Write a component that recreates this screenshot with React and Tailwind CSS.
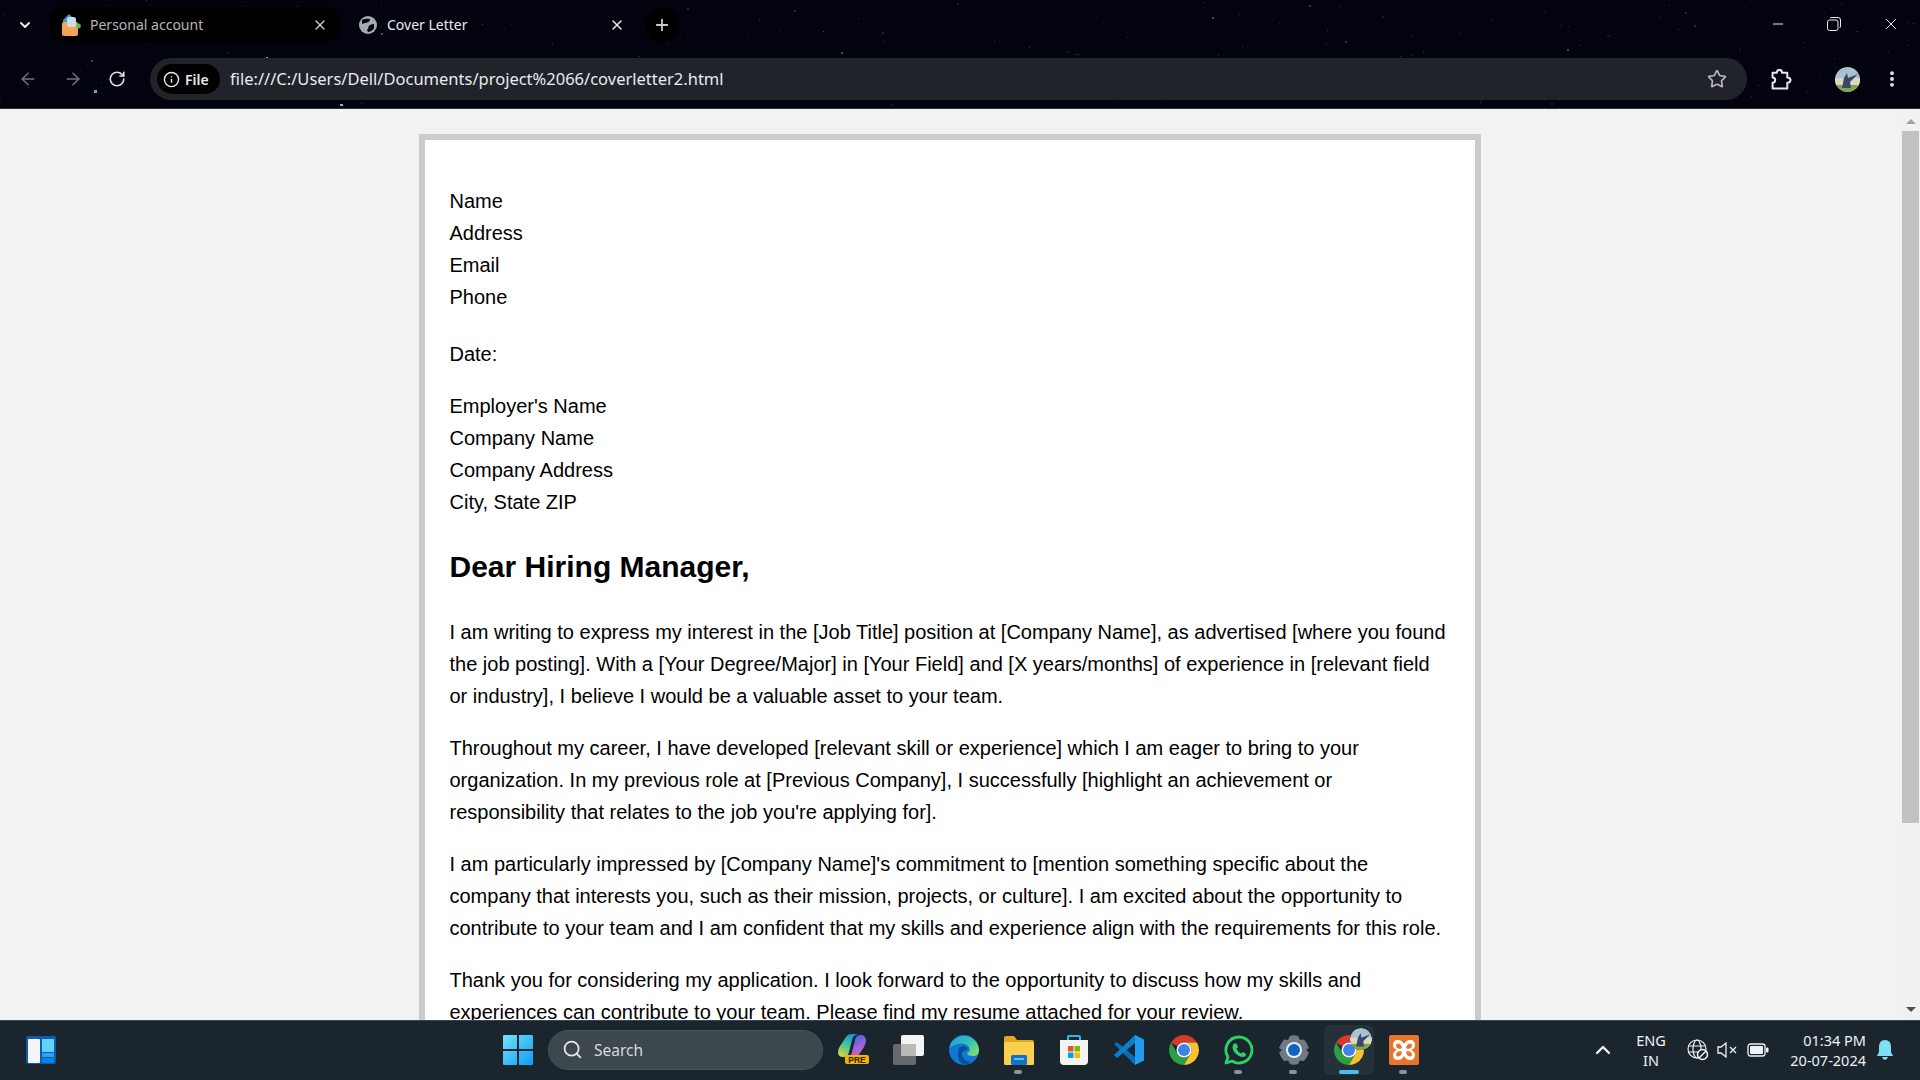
import React from "react";
import { ArrowLeft, ArrowRight, RotateCw, X, Plus, ChevronDown, ChevronUp, Star, Minus, EllipsisVertical, Search, Info } from "lucide-react";

const stars = [];
let seed = 7;
const rnd = () => { seed = (seed * 16807) % 2147483647; return seed / 2147483647; };
for (let i = 0; i < 170; i++) {
  stars.push({ x: Math.round(rnd() * 1920), y: Math.round(rnd() * 106), o: 0.12 + rnd() * 0.3, s: rnd() > 0.8 ? 2 : 1 });
}

function Stars() {
  return (
    <svg className="absolute inset-0 pointer-events-none" width="1920" height="108">
      {stars.map((s, i) => <rect key={i} x={s.x} y={s.y} width={s.s} height={s.s} fill="#9fb4c8" opacity={s.o} />)}
      <rect x="94" y="90" width="3" height="3" fill="#4fb3c0" />
      <rect x="266" y="57" width="2" height="2" fill="#4fb3c0" />
      <rect x="340" y="104" width="3" height="2" fill="#9aa" />
    </svg>
  );
}

function Avatar({ size = 25, id = "av" }) {
  return (
    <svg width={size} height={size} viewBox="0 0 25 25">
      <defs><clipPath id={id}><circle cx="12.5" cy="12.5" r="12.5" /></clipPath></defs>
      <g clipPath={`url(#${id})`}>
        <rect width="25" height="25" fill="#a9c2cf" />
        <rect y="11" width="25" height="8" fill="#ded6bd" />
        <rect y="18" width="25" height="7" fill="#7ea54a" />
        <path d="M7 21 L9 11 L12 6 L13 11 L23 7 L15 15 L16 21 Z" fill="#38476b" />
      </g>
    </svg>
  );
}

function ChromeIcon({ size = 30 }) {
  return (
    <svg width={size} height={size} viewBox="4 4 40 40">
      <path d="M6.68 14 A20 20 0 0 1 41.32 14 L24 14 A10 10 0 0 0 15.34 19 Z" fill="#d9392d" />
      <path d="M6.68 14 A20 20 0 0 0 24 44 L32.66 29 A10 10 0 0 1 15.34 29 Z" fill="#2c9f45" />
      <path d="M41.32 14 A20 20 0 0 1 24 44 L32.66 29 A10 10 0 0 0 24 14 Z" fill="#fbc02d" />
      <circle cx="24" cy="24" r="10" fill="#fff" />
      <circle cx="24" cy="24" r="8" fill="#3f83ea" />
    </svg>
  );
}

const Slot = ({ children, dot, active }) => (
  <div className="relative w-[55px] h-[60px] flex items-center justify-center">
    {active && <div className="absolute left-[3px] top-[5px] w-[50px] h-[50px] rounded-[6px] bg-[#25313a]" />}
    <div className="relative flex items-center justify-center">{children}</div>
    {dot && <div className="absolute bottom-[6px] left-[23px] w-[8px] h-[4px] rounded-full bg-[#8b949b]" />}
    {active && <div className="absolute bottom-[6px] left-[18px] w-[20px] h-[4px] rounded-full bg-[#47bdf5]" />}
  </div>
);

function Taskbar() {
  return (
    <div className="h-[60px] shrink-0 bg-[#1a252d] border-t border-[#3a444b] flex items-center pb-[2px] relative">
      <div className="w-[490px] pl-[26px] flex items-center shrink-0">
        <svg width="30" height="28" viewBox="0 0 30 28">
          <rect width="30" height="28" rx="2" fill="#0f5cab" />
          <rect x="2" y="3" width="12" height="24" rx="1" fill="#f3f5f7" />
          <rect x="16" y="3" width="12" height="13" fill="#62d2fb" />
          <rect x="16" y="17" width="12" height="4" fill="#2aa4ef" />
          <rect x="16" y="22" width="12" height="5" fill="#0a84e6" />
        </svg>
      </div>
      <div className="w-[55px] flex justify-center shrink-0">
        <svg width="30" height="30" viewBox="0 0 30 30">
          <defs><linearGradient id="wg" x1="0" y1="0" x2="1" y2="1"><stop offset="0" stopColor="#6fe4fb" /><stop offset="1" stopColor="#0f9bf5" /></linearGradient></defs>
          <path d="M0 1 Q0 0 1 0 H14 V14 H0 Z M16 0 H29 Q30 0 30 1 V14 H16 Z M0 16 H14 V30 H1 Q0 30 0 29 Z M16 16 H30 V29 Q30 30 29 30 H16 Z" fill="url(#wg)" />
        </svg>
      </div>
      <div className="w-[275px] h-[40px] ml-[3px] shrink-0 rounded-full bg-[#3c474e] border border-[#465158] flex items-center pl-[13px]">
        <Search size={21} strokeWidth={2} className="text-[#e4e7e9]" />
        <span className="ml-[11px] mt-[2px] text-[#d5d9dc] text-[15.5px] font-['Noto_Sans',sans-serif]">Search</span>
      </div>
      <div className="flex ml-[3px] shrink-0">
        <Slot>
          <svg width="31" height="31" viewBox="0 0 31 31">
            <defs>
              <linearGradient id="cpa" x1="0.7" y1="0" x2="0.2" y2="1"><stop offset="0" stopColor="#1c8fe8" /><stop offset=".45" stopColor="#3cc0a8" /><stop offset="1" stopColor="#d6d836" /></linearGradient>
              <linearGradient id="cpb" x1="0.3" y1="0" x2="0.8" y2="1"><stop offset="0" stopColor="#2a6fe0" /><stop offset=".5" stopColor="#9a62dc" /><stop offset="1" stopColor="#ef5fa8" /></linearGradient>
            </defs>
            <path d="M8 3 Q10 0 14 0 H20 Q15 1 14 6 L11 18 Q10 23 5 23 Q0 23 0 18 Q0 15 2 12 Z" fill="url(#cpa)" />
            <path d="M20 22 Q18 24 14 24 H9 Q13 23 14 18 L17 6 Q18 1 23 1 Q27 1 28 6 Q28 9 26 13 Z" fill="url(#cpb)" />
            <rect x="7" y="21" width="24" height="9" rx="2" fill="#f5b400" />
            <text x="19" y="28.6" textAnchor="middle" fontSize="8.5" fontWeight="700" fontFamily="Liberation Sans" fill="#2a2205">PRE</text>
          </svg>
        </Slot>
        <Slot>
          <svg width="31" height="30" viewBox="0 0 31 30">
            <rect x="0" y="9" width="23" height="21" rx="2" fill="#666a6d" />
            <rect x="8" y="0" width="23" height="21" rx="2" fill="#f4f4f4" />
            <rect x="8" y="9" width="15" height="12" fill="#b9b9b9" />
          </svg>
        </Slot>
        <Slot>
          <svg width="30" height="30" viewBox="0 0 30 30">
            <defs><linearGradient id="ed" x1="0" y1="0" x2="1" y2="0.7"><stop offset="0" stopColor="#1b9de2" /><stop offset=".6" stopColor="#35c1b8" /><stop offset="1" stopColor="#7fdc6e" /></linearGradient></defs>
            <circle cx="15" cy="15" r="15" fill="#0f78d0" />
            <path d="M0.3 13 A15 15 0 0 1 30 15 Q30 21 24 21 Q18 21 18 18 Q22 16 20 12 Q16 7 9 9 Q4 10 0.3 13 Z" fill="url(#ed)" />
            <path d="M9 17 Q9 11 15 11 Q20 12 18 15 Q12 15 13 21 Q15 26 22 27 Q18 30 14 29.5 Q8 26 9 17 Z" fill="#0b4f9c" />
          </svg>
        </Slot>
        <Slot dot>
          <svg width="30" height="30" viewBox="0 0 30 30">
            <path d="M0 3 Q0 1 2 1 H10 L13 5 H28 Q30 5 30 7 V10 H0 Z" fill="#e0a91d" />
            <rect x="0" y="7" width="30" height="23" rx="1.5" fill="#fcd04f" />
            <rect x="7" y="20" width="16" height="10" rx="1.5" fill="#0f74c9" />
            <rect x="10" y="23" width="10" height="2" fill="#66bdf2" />
          </svg>
        </Slot>
        <Slot>
          <svg width="28" height="30" viewBox="0 0 28 30">
            <path d="M8 6 V2 Q8 1 9 1 H19 Q20 1 20 2 V6" fill="none" stroke="#33b6ee" strokeWidth="2" />
            <path d="M0 5 H28 V26 Q28 30 24 30 H4 Q0 30 0 26 Z" fill="#f3f3f3" />
            <rect x="8" y="11" width="5.5" height="5.5" fill="#f25022" />
            <rect x="14.5" y="11" width="5.5" height="5.5" fill="#7fba00" />
            <rect x="8" y="17.5" width="5.5" height="5.5" fill="#00a4ef" />
            <rect x="14.5" y="17.5" width="5.5" height="5.5" fill="#ffb900" />
          </svg>
        </Slot>
        <Slot>
          <svg width="30" height="30" viewBox="0 0 30 30">
            <path d="M0 9 L3 7 L21 22 V30 Z" fill="#0a6cb5" />
            <path d="M21 0 L0 20 L3 23 L21 8 Z" fill="#0a7fd0" />
            <path d="M21 0 L30 4.5 V25.5 L21 30 Z" fill="#1f9cf0" />
          </svg>
        </Slot>
        <Slot><ChromeIcon /></Slot>
        <Slot dot>
          <svg width="30" height="30" viewBox="0 0 30 30">
            <path d="M15 2 A13 13 0 1 1 8 26 L2 28 L4 22 A13 13 0 0 1 15 2 Z" fill="none" stroke="#2bd366" strokeWidth="2.8" strokeLinejoin="round" />
            <path d="M10 8.5 L12.5 8.5 L14 12 L12.5 14 Q14 17 17 18.5 L19 17 L22 19 L21.5 21 Q19 23 15 21 Q9 18 8.5 12.5 Q8.5 10 10 8.5 Z" fill="#2bd366" />
          </svg>
        </Slot>
        <Slot dot>
          <svg width="30" height="30" viewBox="0 0 30 30">
            <path d="M11 1 Q15 -0.5 19 1 L21 5 L25 4.5 Q28 8 30 13 L27 15 L30 17.5 Q28 23 25 26 L21 25.5 L19 29 Q15 30.5 11 29 L9 25.5 L5 26 Q2 23 0 17.5 L3 15 L0 13 Q2 8 5 4.5 L9 5 Z" fill="#6f7a86" />
            <circle cx="15" cy="15" r="8" fill="#e8edf2" />
            <circle cx="15" cy="15" r="6" fill="#0f66c2" />
          </svg>
        </Slot>
        <Slot active>
          <ChromeIcon />
          <div className="absolute -right-[8px] -top-[7px] w-[22px] h-[22px] rounded-full overflow-hidden bg-black"><Avatar size={22} id="av2" /></div>
        </Slot>
        <Slot dot>
          <svg width="30" height="30" viewBox="0 0 30 30">
            <rect width="30" height="30" rx="2" fill="#e9742b" />
            <path d="M9 5 Q13 5 15 9 Q17 5 21 5 Q26 5 26 10 Q26 13.5 22 15 Q26 16.5 26 20 Q26 25 21 25 Q17 25 15 21 Q13 25 9 25 Q4 25 4 20 Q4 16.5 8 15 Q4 13.5 4 10 Q4 5 9 5 Z" fill="#fff" />
            <path d="M9 8.5 Q12 8.5 13 13 L11 14 Q7 13 7 10.5 Q7 8.5 9 8.5 Z M21 8.5 Q18 8.5 17 13 L19 14 Q23 13 23 10.5 Q23 8.5 21 8.5 Z M9 21.5 Q12 21.5 13 17 L11 16 Q7 17 7 19.5 Q7 21.5 9 21.5 Z M21 21.5 Q18 21.5 17 17 L19 16 Q23 17 23 19.5 Q23 21.5 21 21.5 Z" fill="#e9742b" />
          </svg>
        </Slot>
      </div>
      <div className="ml-auto flex items-center text-[#f0f2f3] font-['Noto_Sans',sans-serif] shrink-0">
        <ChevronUp size={24} strokeWidth={2.4} />
        <div className="w-[48px] ml-[12px] text-center text-[14.5px] leading-[20px]"><div>ENG</div><div>IN</div></div>
        <svg className="ml-[12px]" width="22" height="22" viewBox="0 0 22 22" fill="none" stroke="#f0f2f3" strokeWidth="1.2">
          <circle cx="10" cy="10" r="9" />
          <ellipse cx="10" cy="10" rx="4" ry="9" />
          <path d="M1 7 H19 M1 13 H19" />
          <circle cx="15.5" cy="15.5" r="5" fill="#1a252d" strokeWidth="1.5" />
          <path d="M12 19 L19 12" strokeWidth="1.5" />
        </svg>
        <svg className="ml-[8px]" width="20" height="18" viewBox="0 0 20 18" fill="none" stroke="#f0f2f3" strokeWidth="1.3">
          <path d="M1 6 H4 L9 2 V16 L4 12 H1 Z" />
          <path d="M13 6 L19 12 M19 6 L13 12" />
        </svg>
        <svg className="ml-[10px]" width="22" height="14" viewBox="0 0 22 14" fill="none" stroke="#f0f2f3" strokeWidth="1.3">
          <rect x="1" y="1" width="17" height="12" rx="2.5" />
          <rect x="3" y="3" width="13" height="8" rx="1" fill="#f0f2f3" stroke="none" />
          <rect x="19" y="4.5" width="2.5" height="5" rx="1" fill="#f0f2f3" stroke="none" />
        </svg>
        <div className="ml-[7px] w-[90px] text-right text-[14.5px] leading-[20px]"><div>01:34 PM</div><div>20-07-2024</div></div>
        <svg className="ml-[11px] mr-[27px]" width="16" height="20" viewBox="0 0 16 20" fill="#7fe0f5">
          <path d="M8 0 Q14 0 14 7 V12 L16 16 H0 L2 12 V7 Q2 0 8 0 Z" />
          <path d="M5 17 H11 Q10 20 8 20 Q6 20 5 17 Z" />
        </svg>
      </div>
    </div>
  );
}

function ChromeBar() {
  const ui = "font-['Noto_Sans',sans-serif]";
  return (
    <div className={`relative h-[109px] shrink-0 bg-[#02030f] border-b border-[#2b2e36] ${ui}`}>
      <Stars />
      <div className="relative h-[50px] flex items-start">
        <div className="w-[50px] h-[50px] flex items-center justify-center pb-[1px] text-[#e8eaed]"><ChevronDown size={16} strokeWidth={3} /></div>
        <div className="w-[290px] h-[35px] mt-[7px] rounded-[14px] bg-black flex items-center pl-[11px] pr-[11px]">
          <svg width="20" height="22" viewBox="0 0 20 22">
            <path d="M2 6 L8 0 L12 4 L8 10 H2 Z" fill="#3f97d8" />
            <rect x="1" y="8" width="16" height="14" rx="2" fill="#f2a654" />
            <rect x="6" y="3" width="9" height="10" rx="2.5" fill="#cfdde8" />
            <circle cx="17.5" cy="12" r="2.4" fill="#4fc25a" />
          </svg>
          <span className="ml-[9px] text-[14px] text-[#b3b5b8] whitespace-nowrap">Personal account</span>
          <X size={16} strokeWidth={2.2} className="ml-auto mr-[1px] text-[#c4c6c9]" />
        </div>
        <div className="w-[297px] h-[35px] mt-[7px] flex items-center pl-[18px] pr-[12px]">
          <svg width="20" height="20" viewBox="0 0 20 20">
            <circle cx="10" cy="10" r="9" fill="#a4aab0" />
            <path d="M4 5 Q8 3 12 4 Q12 7 9 7.5 Q6 8 4 9 Z M16 9 Q12 9 10.5 11.5 Q11 13 9 15 L10 17 Q15 16 16 13 Z" fill="#02030f" />
          </svg>
          <span className="ml-[9px] text-[14px] text-[#e8eaed] whitespace-nowrap">Cover Letter</span>
          <X size={16} strokeWidth={2.2} className="ml-auto text-[#e8eaed]" />
        </div>
        <div className="w-[34px] h-[34px] mt-[8px] ml-[8px] rounded-full bg-black flex items-center justify-center text-[#c8cace]"><Plus size={18} strokeWidth={2.4} /></div>
        <div className="ml-auto flex items-center h-[48px] text-[#e8eaed]">
          <div className="w-[56px] flex justify-center"><Minus size={16} strokeWidth={1.6} /></div>
          <div className="w-[56px] flex justify-center">
            <svg width="14" height="14" viewBox="0 0 14 14" fill="none" stroke="#e8eaed" strokeWidth="1">
              <rect x="0.5" y="3" width="10.5" height="10.5" rx="2" />
              <path d="M3 1 Q3.5 0.5 5 0.5 H11 Q13.5 0.5 13.5 3 V9 Q13.5 10.5 12.5 11" />
            </svg>
          </div>
          <div className="w-[58px] flex justify-center"><X size={18} strokeWidth={1.3} /></div>
        </div>
      </div>
      <div className="relative h-[58px] flex items-start">
        <div className="w-[150px] h-[58px] flex items-center pl-[18px] gap-[25px]">
          <ArrowLeft size={20} strokeWidth={1.8} className="text-[#71757a]" />
          <ArrowRight size={20} strokeWidth={1.8} className="text-[#71757a]" />
          <RotateCw size={18} strokeWidth={2.2} className="text-[#dfe1e4]" />
        </div>
        <div className="w-[1597px] h-[42px] mt-[8px] rounded-full bg-[#20232a] flex items-center pl-[7px] pr-[20px]">
          <div className="w-[63px] h-[30px] rounded-full bg-black flex items-center pl-[6px] text-[#e8eaed]">
            <Info size={17} strokeWidth={2} />
            <span className="ml-[5px] text-[14px] font-semibold">File</span>
          </div>
          <span className="ml-[10px] text-[16.5px] text-[#e8eaed] whitespace-nowrap">file:///C:/Users/Dell/Documents/project%2066/coverletter2.html</span>
          <Star size={20} strokeWidth={2} className="ml-auto text-[#b5b7ba]" />
        </div>
        <div className="h-[42px] mt-[8px] ml-auto flex items-center text-[#e8eaed]">
          <svg width="21" height="21" viewBox="0 0 20 20" fill="none" stroke="#e4e6f0" strokeWidth="1.9" strokeLinejoin="round">
            <path d="M1.5 3.5 H5.5 Q5.5 0.9 8 0.9 Q10.5 0.9 10.5 3.5 H15.5 V8 Q18.6 8 18.6 10.5 Q18.6 13 15.5 13 V18.5 H1.5 V13 Q4 13 4 10.5 Q4 8 1.5 8 Z" />
          </svg>
          <div className="ml-[43px]"><Avatar /></div>
          <EllipsisVertical size={20} strokeWidth={2.6} className="ml-[22px] mr-[18px]" />
        </div>
      </div>
    </div>
  );
}

function Scrollbar() {
  return (
    <div className="w-[19px] shrink-0 bg-[#f1f1f1] flex flex-col items-center relative">
      <div className="h-[22px] w-full flex items-center justify-center pt-[3px]">
        <div className="w-0 h-0 border-l-[5px] border-r-[5px] border-b-[5px] border-l-transparent border-r-transparent border-b-[#a3a3a3]" />
      </div>
      <div className="w-[17px] h-[692px] bg-[#c1c1c1]" />
      <div className="mt-auto h-[22px] w-full flex items-center justify-center">
        <div className="w-0 h-0 border-l-[5px] border-r-[5px] border-t-[5px] border-l-transparent border-r-transparent border-t-[#505050]" />
      </div>
    </div>
  );
}

function Page() {
  const p = "my-[20px]";
  return (
    <div className="flex-1 min-w-0 overflow-hidden bg-[#f2f2f2] flex justify-center pt-[25px] font-['Liberation_Sans',Arial,sans-serif] text-[20px] leading-[32px] text-black">
      <div className="w-[1062px] -ml-[2px] h-fit shrink-0 bg-white border-[6px] border-[#cccccc] px-[25px] pt-[25px]">
        <div className="mt-[20px]">
          <div>Name</div><div>Address</div><div>Email</div><div>Phone</div>
        </div>
        <p className="mt-[25px] mb-[20px]">Date:</p>
        <p className={p}>Employer's Name<br />Company Name<br />Company Address<br />City, State ZIP</p>
        <h2 className="text-[30px] leading-[48px] font-bold my-[25px]">Dear Hiring Manager,</h2>
        <p className={p}>I am writing to express my interest in the [Job Title] position at [Company Name], as advertised [where you found the job posting]. With a [Your Degree/Major] in [Your Field] and [X years/months] of experience in [relevant field or industry], I believe I would be a valuable asset to your team.</p>
        <p className={p}>Throughout my career, I have developed [relevant skill or experience] which I am eager to bring to your organization. In my previous role at [Previous Company], I successfully [highlight an achievement or responsibility that relates to the job you're applying for].</p>
        <p className={p}>I am particularly impressed by [Company Name]'s commitment to [mention something specific about the company that interests you, such as their mission, projects, or culture]. I am excited about the opportunity to contribute to your team and I am confident that my skills and experience align with the requirements for this role.</p>
        <p className={p}>Thank you for considering my application. I look forward to the opportunity to discuss how my skills and experiences can contribute to your team. Please find my resume attached for your review.</p>
      </div>
    </div>
  );
}

export default function App() {
  return (
    <div className="w-[1920px] h-[1080px] flex flex-col overflow-hidden">
      <ChromeBar />
      <div className="flex-1 min-h-0 flex">
        <Page />
        <Scrollbar />
      </div>
      <Taskbar />
    </div>
  );
}
